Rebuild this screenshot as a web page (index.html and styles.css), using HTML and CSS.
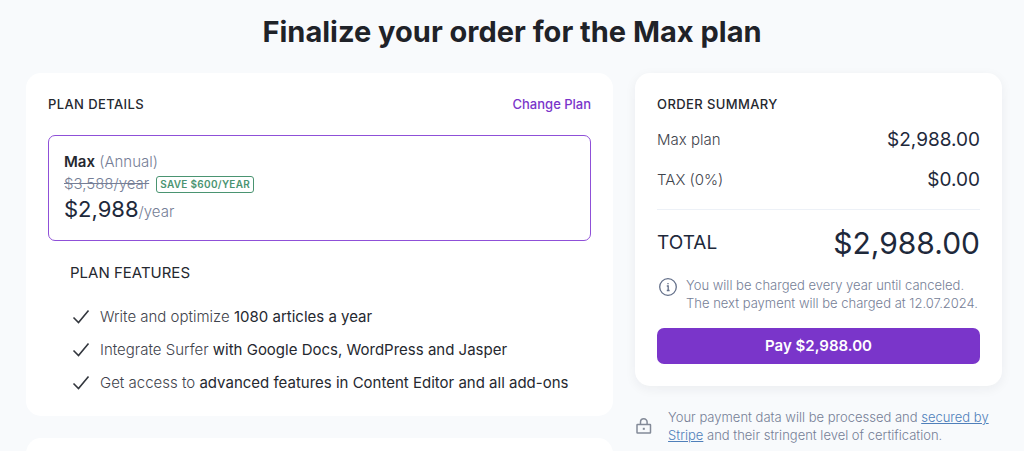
FILE: index.html
```html
<!DOCTYPE html>
<html lang="en">
<head>
    <meta charset="UTF-8">
    <title>Finalize your order</title>
    <meta name="viewport" content="width=device-width, initial-scale=1">
    <link rel="stylesheet" href="styles.css">
</head>
<body>
    <h1>Finalize your order for the Max plan</h1>
    <main class="checkout">
        <div class="column">
            <section class="card">
                <div class="card-header">
                    <h2>PLAN DETAILS</h2>
                    <a class="change-plan" href="#">Change Plan</a>
                </div>
                <div class="plan-box">
                    <div class="plan-name"><strong>Max</strong> (Annual)</div>
                    <div class="old-price"><s>$3,588/year</s><span class="badge">SAVE $600/YEAR</span></div>
                    <div class="price"><span class="amount">$2,988</span>/year</div>
                </div>
                <div class="features">
                    <h3>PLAN FEATURES</h3>
                    <ul>
                        <li>
                            <svg class="check" viewBox="0 0 18 18"><path d="M1.500 9.500l5 5L16.500 2.500"/></svg>
                            <span>Write and optimize <b>1080 articles a year</b></span>
                        </li>
                        <li>
                            <svg class="check" viewBox="0 0 18 18"><path d="M1.500 9.500l5 5L16.500 2.500"/></svg>
                            <span>Integrate Surfer <b>with Google Docs, WordPress and Jasper</b></span>
                        </li>
                        <li>
                            <svg class="check" viewBox="0 0 18 18"><path d="M1.500 9.500l5 5L16.500 2.500"/></svg>
                            <span>Get access to <b>advanced features in Content Editor and all add-ons</b></span>
                        </li>
                    </ul>
                </div>
            </section>
            <section class="card"></section>
        </div>
        <aside class="column">
            <section class="card summary">
                <h2>ORDER SUMMARY</h2>
                <div class="row"><span>Max plan</span><span class="value">$2,988.00</span></div>
                <div class="row"><span>TAX (0%)</span><span class="value">$0.00</span></div>
                <div class="row total"><span>TOTAL</span><span class="value">$2,988.00</span></div>
                <div class="note">
                    <svg class="info" viewBox="0 0 22 22">
                        <circle cx="11" cy="11" r="8.300"/>
                        <path d="M9.800 10H11.200V14.500M9.800 14.500H12.600M11 7V8.300"/>
                    </svg>
                    <p>You will be charged every year until canceled.<br>The next payment will be charged at 12.07.2024.</p>
                </div>
                <button type="button">Pay $2,988.00</button>
            </section>
            <div class="secure">
                <svg class="lock" viewBox="0 0 18 18">
                    <rect x="2" y="7.500" width="13.500" height="8.500" rx="0.500"/>
                    <path d="M5.500 7.500V5a3.300 3.300 0 0 1 6.600 0V7.500"/>
                    <rect class="keyhole" x="7.800" y="10.800" width="2" height="2"/>
                </svg>
                <p>Your payment data will be processed and <a href="#">secured by Stripe</a> and their stringent level of certification.</p>
            </div>
        </aside>
    </main>
</body>
</html>
```

FILE: styles.css
```css
* {
    box-sizing: border-box;
}
body {
    font-family: Inter, 'Liberation Sans', sans-serif;
    font-size: 15px;
    background: #f8fafc;
    color: #3f444d;
    height: 100vh;
    margin: 0;
    overflow: hidden;
}
h1, h2, h3, p, ul {
    margin: 0;
    padding: 0;
}
h1 {
    color: #1f2228;
    font-size: 29px;
    font-weight: 700;
    line-height: 36px;
    text-align: center;
    padding: 14px 0 23px;
}
h2 {
    color: #25282f;
    font-size: 13px;
    font-weight: 500;
    line-height: 18px;
    letter-spacing: 0.03em;
}
.checkout {
    display: grid;
    grid-template-columns: 16fr 10fr;
    gap: 22px;
    padding: 0 22px 0 26px;
}
.column {
    display: flex;
    flex-direction: column;
    gap: 22px;
}
.card {
    background: #fff;
    border-radius: 15px;
    padding: 22px;
}
.card-header {
    display: flex;
    justify-content: space-between;
    margin-bottom: 22px;
}
.change-plan {
    color: #7a35ca;
    font-size: 13px;
    font-weight: 500;
    line-height: 18px;
    text-decoration: none;
}
.plan-box {
    border: 1px solid #8f50d8;
    border-radius: 7px;
    padding: 15px 15px 14px;
    color: #757e96;
    font-weight: 300;
}
.plan-name {
    line-height: 22px;
}
.plan-name strong {
    color: #25282f;
    font-weight: 600;
}
.old-price {
    display: flex;
    align-items: center;
    gap: 7px;
    line-height: 22px;
}
.badge {
    border: 1px solid #4a9471;
    border-radius: 3px;
    color: #4a9471;
    font-size: 10px;
    font-weight: 600;
    line-height: 15px;
    letter-spacing: 0.03em;
    padding: 0 3px;
}
.price {
    display: flex;
    align-items: baseline;
    line-height: 28px;
}
.amount {
    color: #1e293b;
    font-size: 22px;
    font-weight: 400;
}
.features {
    padding: 22px 22px 0;
}
h3 {
    font-size: 15px;
    font-weight: 400;
    line-height: 20px;
    color: #25282f;
    margin-bottom: 23px;
}
ul {
    display: flex;
    flex-direction: column;
    gap: 11px;
    list-style: none;
}
li {
    display: flex;
    align-items: center;
    gap: 10px;
    line-height: 22px;
    padding-left: 2px;
    font-weight: 300;
}
b {
    font-weight: 400;
    color: #25282f;
}
svg {
    flex: none;
    fill: none;
}
.check {
    width: 18px;
    height: 18px;
    stroke: #33373e;
    stroke-width: 1.6;
}
.summary {
    box-shadow: 0 3px 12px rgba(30, 41, 59, 0.06);
}
.row {
    display: flex;
    justify-content: space-between;
    align-items: center;
    font-weight: 300;
    line-height: 26px;
    margin-top: 14px;
}
.value {
    color: #1e293b;
    font-size: 19px;
    font-weight: 400;
}
.total {
    border-top: 1px solid #edf1f7;
    color: #1e293b;
    font-size: 19px;
    font-weight: 400;
    line-height: 36px;
    margin-top: 16px;
    padding: 15px 0;
}
.total .value {
    font-size: 30px;
}
.note {
    display: flex;
    gap: 7px;
    margin-bottom: 16px;
}
p {
    color: #757e96;
    font-size: 13px;
    font-weight: 350;
    line-height: 18px;
}
.info {
    width: 22px;
    height: 22px;
    stroke: #64708a;
    stroke-width: 1.3;
}
button {
    width: 100%;
    background: #7a35ca;
    color: #fff;
    border: none;
    border-radius: 7px;
    font-family: inherit;
    font-size: 15px;
    font-weight: 600;
    line-height: 20px;
    padding: 8px;
    cursor: pointer;
}
button:hover {
    background: #6526b3;
}
.secure {
    display: flex;
    align-items: center;
    gap: 15px;
}
.secure a {
    color: #4f7fba;
}
.lock {
    width: 18px;
    height: 18px;
    stroke: #838a98;
    stroke-width: 1.5;
}
.keyhole {
    fill: #838a98;
    stroke: none;
}
@media (max-width: 800px) {
    body {
        overflow: auto;
    }
    .checkout {
        grid-template-columns: 1fr;
    }
}
```
